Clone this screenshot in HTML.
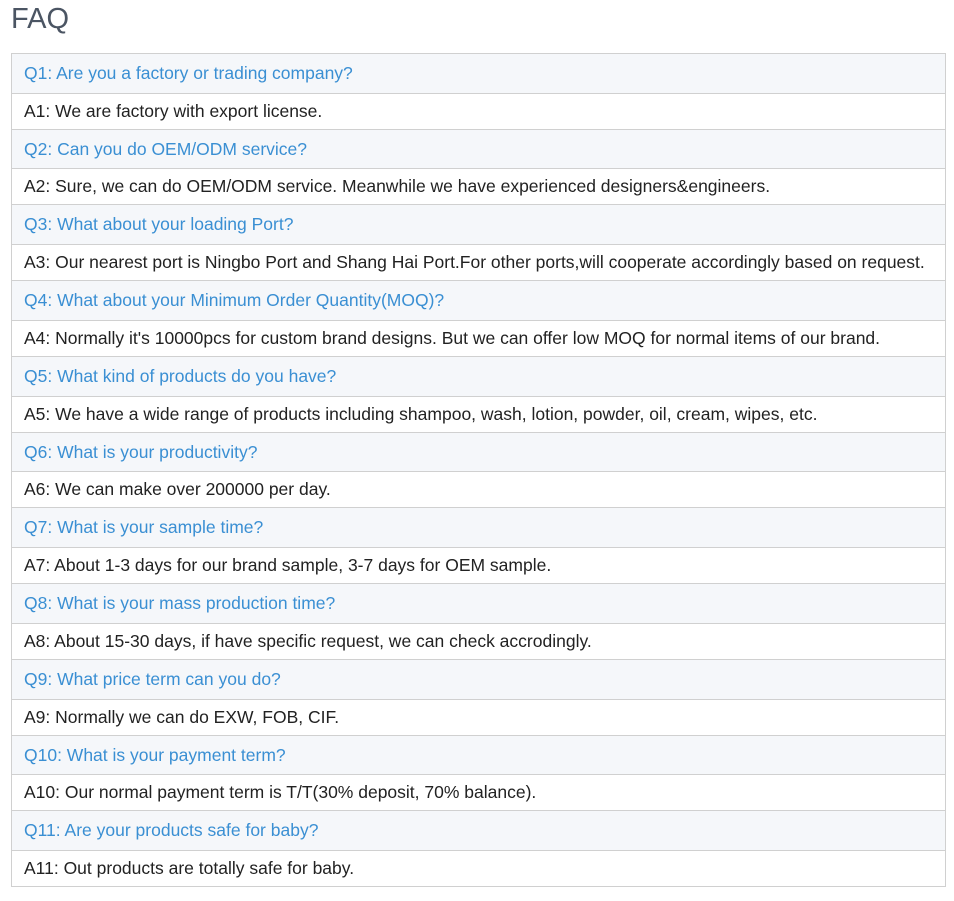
<!DOCTYPE html>
<html><head><style>
body{margin:0;background:#fff;font-family:"Liberation Sans",Arial,sans-serif;width:954px;height:901px;overflow:hidden}
h2{position:absolute;left:11px;top:1px;margin:0;font-weight:normal;font-size:29px;line-height:36px;color:#4b5563}
.t{position:absolute;left:11px;top:53px;width:933px;border:1px solid #d0d0d0;border-bottom:none}
.r{border-bottom:1px solid #d0d0d0;padding-left:12px;font-size:17.5px;box-sizing:border-box;white-space:nowrap}
.q{height:40px;line-height:39px;background:#f5f7fa;color:#3a8fd3}
.a{height:36px;line-height:35px;color:#222}
.q.s{height:39px;line-height:38px}
</style></head><body>
<h2>FAQ</h2>
<div class="t">
<div class="r q">Q1: Are you a factory or trading company?</div>
<div class="r a">A1: We are factory with export license.</div>
<div class="r q s">Q2: Can you do OEM/ODM service?</div>
<div class="r a">A2: Sure, we can do OEM/ODM service. Meanwhile we have experienced designers&amp;engineers.</div>
<div class="r q">Q3: What about your loading Port?</div>
<div class="r a">A3: Our nearest port is Ningbo Port and Shang Hai Port.For other ports,will cooperate accordingly based on request.</div>
<div class="r q">Q4: What about your Minimum Order Quantity(MOQ)?</div>
<div class="r a">A4: Normally it's 10000pcs for custom brand designs. But we can offer low MOQ for normal items of our brand.</div>
<div class="r q">Q5: What kind of products do you have?</div>
<div class="r a">A5: We have a wide range of products including shampoo, wash, lotion, powder, oil, cream, wipes, etc.</div>
<div class="r q s">Q6: What is your productivity?</div>
<div class="r a">A6: We can make over 200000 per day.</div>
<div class="r q">Q7: What is your sample time?</div>
<div class="r a">A7: About 1-3 days for our brand sample, 3-7 days for OEM sample.</div>
<div class="r q">Q8: What is your mass production time?</div>
<div class="r a">A8: About 15-30 days, if have specific request, we can check accrodingly.</div>
<div class="r q">Q9: What price term can you do?</div>
<div class="r a">A9: Normally we can do EXW, FOB, CIF.</div>
<div class="r q s">Q10: What is your payment term?</div>
<div class="r a">A10: Our normal payment term is T/T(30% deposit, 70% balance).</div>
<div class="r q">Q11: Are your products safe for baby?</div>
<div class="r a">A11: Out products are totally safe for baby.</div>
</div>
</body></html>
